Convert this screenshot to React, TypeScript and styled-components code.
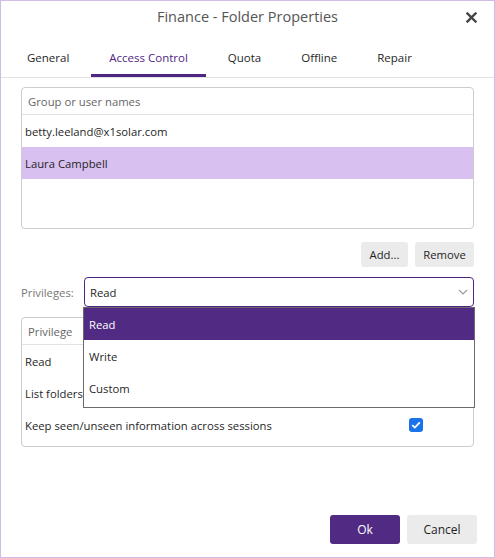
import React from "react";
import styled, { createGlobalStyle } from "styled-components";

const GlobalStyle = createGlobalStyle`
  html, body {
    margin: 0;
    padding: 0;
    background: #ffffff;
  }
  body {
    font-family: "Open Sans", "Noto Sans", "Liberation Sans", sans-serif;
    font-size: 11.3px;
    color: #1f1f1f;
  }
  * {
    box-sizing: border-box;
  }
`;

const Window = styled.div`
  width: 495px;
  height: 558px;
  border: 1px solid #cfbde6;
  display: flex;
  flex-direction: column;
  background: #fff;
`;

const TitleBar = styled.div`
  height: 31px;
  display: flex;
  align-items: center;
  justify-content: center;
  position: relative;
`;

const Title = styled.div`
  font-size: 14.5px;
  color: #555;
`;

const CloseButton = styled.button`
  position: absolute;
  right: 16px;
  top: 9px;
  width: 14px;
  height: 14px;
  padding: 0;
  border: none;
  background: none;
  display: grid;
  place-content: center;
  cursor: pointer;
`;

const TabBar = styled.div`
  display: flex;
  gap: 4px;
  padding-left: 8px;
  border-bottom: 1px solid #e2e2e2;
`;

const Tab = styled.div<{ $active?: boolean }>`
  height: 45px;
  padding: 8px 18px 0;
  display: flex;
  align-items: center;
  font-size: 11.5px;
  border-bottom: 3px solid ${(p) => (p.$active ? "#4f2582" : "transparent")};
  color: ${(p) => (p.$active ? "#4f2582" : "#1f1f1f")};
`;

const Body = styled.div`
  padding: 9px 20px 0;
  display: flex;
  flex-direction: column;
`;

const Panel = styled.div<{ $height: number }>`
  height: ${(p) => p.$height}px;
  border: 1px solid #cdcdcd;
  border-radius: 4px;
  overflow: hidden;
`;

const PanelHeader = styled.div`
  height: 27px;
  padding: 0 6px;
  display: flex;
  align-items: center;
  color: #666;
  border-bottom: 1px solid #e2e2e2;
`;

const ListRow = styled.div<{ $selected?: boolean }>`
  height: 32px;
  padding: 0 3px;
  display: flex;
  align-items: center;
  background: ${(p) => (p.$selected ? "#d8c1f0" : "transparent")};
`;

const ButtonRow = styled.div`
  margin-top: 13px;
  display: flex;
  justify-content: flex-end;
  gap: 7px;
`;

const GrayButton = styled.button<{ $width: number }>`
  width: ${(p) => p.$width}px;
  height: 25px;
  border: none;
  border-radius: 3px;
  background: #ebebeb;
  font: inherit;
  color: #1f1f1f;
  padding: 0;
`;

const PrivilegeRow = styled.div`
  margin-top: 10px;
  display: flex;
  align-items: center;
  gap: 11px;
`;

const FieldLabel = styled.span`
  color: #777;
  width: 52px;
`;

const SelectWrap = styled.div`
  position: relative;
  flex: 1;
`;

const SelectBox = styled.div`
  height: 30px;
  border: 1px solid #4f2582;
  border-radius: 4px;
  padding: 0 5px;
  display: flex;
  align-items: center;
  justify-content: space-between;
`;

const Menu = styled.div`
  position: absolute;
  top: 30px;
  left: -1px;
  right: -1px;
  border: 1px solid #6b6b6b;
  background: #fff;
  padding: 0 0 3px;
  z-index: 2;
`;

const MenuItem = styled.div<{ $active?: boolean }>`
  height: 32px;
  padding: 0 5px;
  display: flex;
  align-items: center;
  background: ${(p) => (p.$active ? "#512a83" : "transparent")};
  color: ${(p) => (p.$active ? "#fff" : "#1f1f1f")};
`;

const TableWrap = styled.div`
  margin-top: 10px;
`;

const TableRow = styled.div`
  height: 32px;
  padding: 0 3px;
  display: flex;
  align-items: center;
  justify-content: space-between;
`;

const CheckCell = styled.div`
  width: 14px;
  height: 14px;
  margin-right: 47px;
  border-radius: 3px;
  background: #1a73e8;
  display: grid;
  place-content: center;
`;

const Footer = styled.div`
  margin-top: auto;
  padding: 0 17px 13px;
  display: flex;
  justify-content: flex-end;
  gap: 7px;
`;

const DialogButton = styled.button<{ $primary?: boolean }>`
  width: 70px;
  height: 29px;
  border: none;
  border-radius: 3px;
  font: inherit;
  font-size: 12px;
  background: ${(p) => (p.$primary ? "#512a83" : "#ebebeb")};
  color: ${(p) => (p.$primary ? "#fff" : "#1f1f1f")};
`;

const tabs = ["General", "Access Control", "Quota", "Offline", "Repair"];

export default function App() {
  return (
    <>
      <GlobalStyle />
      <Window>
        <TitleBar>
          <Title>Finance - Folder Properties</Title>
          <CloseButton aria-label="Close">
            <svg width="11" height="11" viewBox="0 0 11 11">
              <path d="M1.5 1.5 L9.5 9.5 M9.5 1.5 L1.5 9.5" stroke="#444" strokeWidth="2.4" strokeLinecap="square" />
            </svg>
          </CloseButton>
        </TitleBar>
        <TabBar>
          {tabs.map((t) => (
            <Tab key={t} $active={t === "Access Control"}>
              {t}
            </Tab>
          ))}
        </TabBar>
        <Body>
          <Panel $height={142}>
            <PanelHeader>Group or user names</PanelHeader>
            <ListRow>betty.leeland@x1solar.com</ListRow>
            <ListRow $selected>Laura Campbell</ListRow>
          </Panel>
          <ButtonRow>
            <GrayButton $width={47}>Add...</GrayButton>
            <GrayButton $width={59}>Remove</GrayButton>
          </ButtonRow>
          <PrivilegeRow>
            <FieldLabel>Privileges:</FieldLabel>
            <SelectWrap>
              <SelectBox>
                <span>Read</span>
                <svg width="10" height="6" viewBox="0 0 10 6">
                  <path d="M1 1 L5 5 L9 1" fill="none" stroke="#999" strokeWidth="1.1" />
                </svg>
              </SelectBox>
              <Menu>
                <MenuItem $active>Read</MenuItem>
                <MenuItem>Write</MenuItem>
                <MenuItem>Custom</MenuItem>
              </Menu>
            </SelectWrap>
          </PrivilegeRow>
          <TableWrap>
            <Panel $height={130}>
              <PanelHeader>Privilege</PanelHeader>
              <TableRow>Read</TableRow>
              <TableRow>List folders</TableRow>
              <TableRow>
                <span>Keep seen/unseen information across sessions</span>
                <CheckCell>
                  <svg width="10" height="8" viewBox="0 0 10 8">
                    <path d="M1.2 4.2 L3.8 6.6 L8.8 1.4" fill="none" stroke="#fff" strokeWidth="1.8" />
                  </svg>
                </CheckCell>
              </TableRow>
            </Panel>
          </TableWrap>
        </Body>
        <Footer>
          <DialogButton $primary>Ok</DialogButton>
          <DialogButton>Cancel</DialogButton>
        </Footer>
      </Window>
    </>
  );
}
